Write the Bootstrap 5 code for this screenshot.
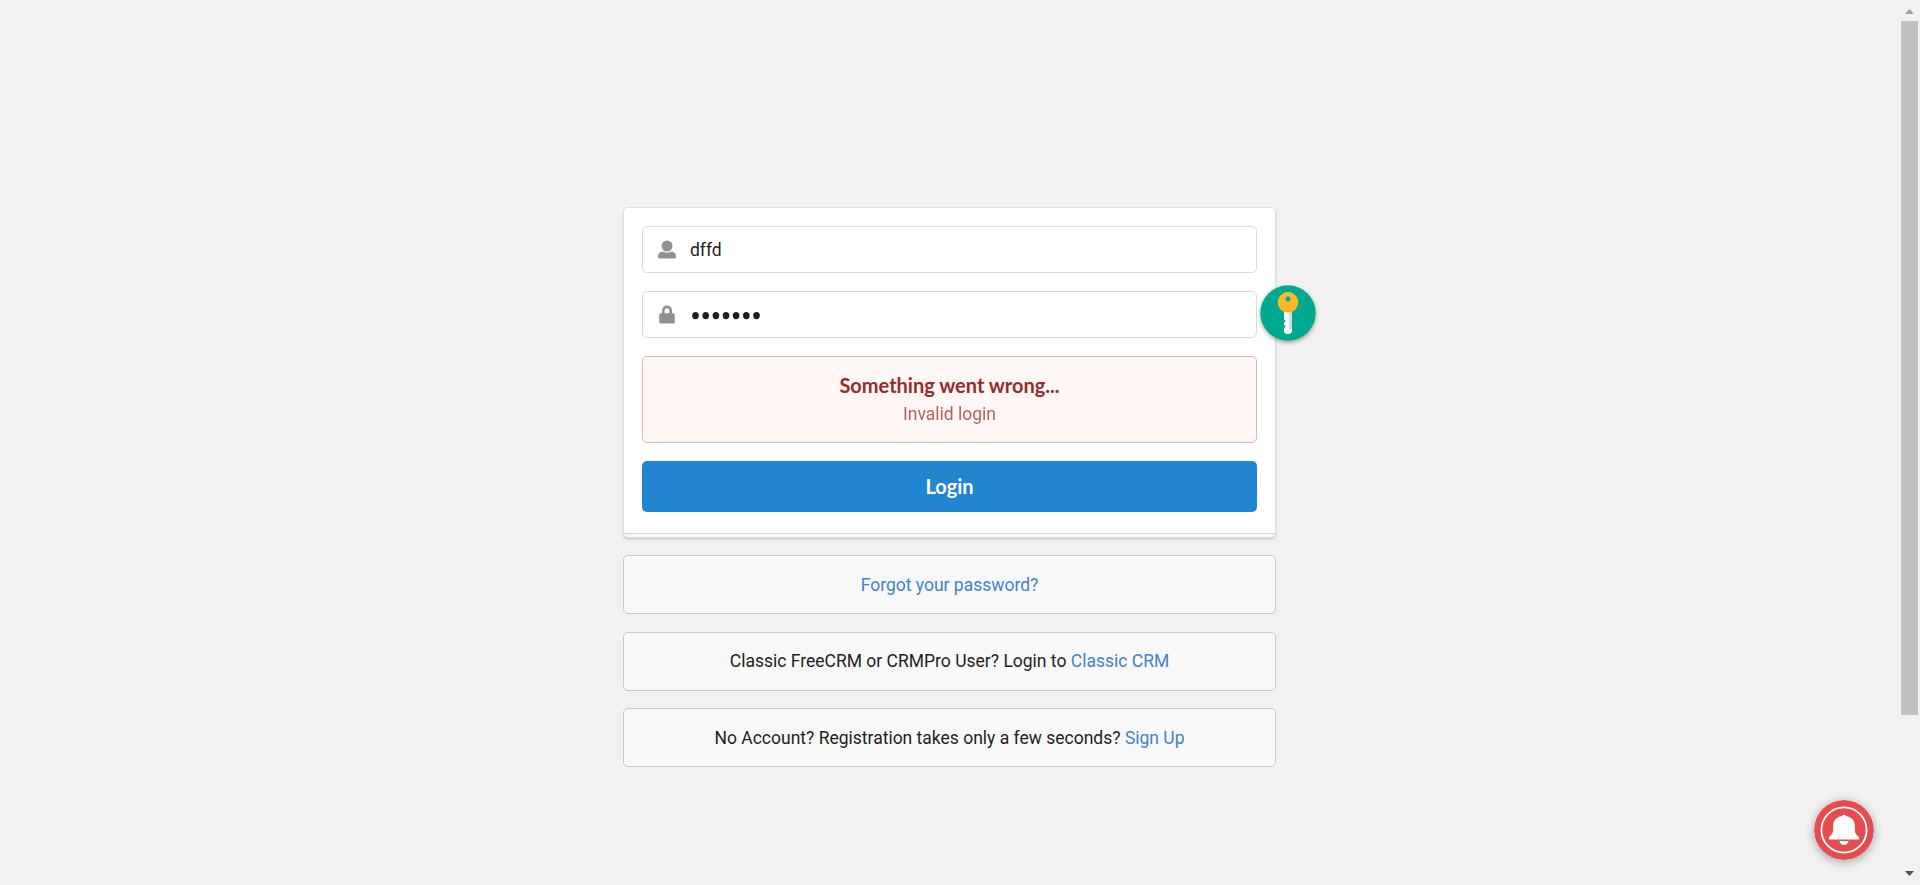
<!DOCTYPE html>
<html lang="en">
<head>
<meta charset="utf-8">
<meta name="viewport" content="width=device-width, initial-scale=1">
<title>Login</title>
<link href="https://cdn.jsdelivr.net/npm/bootstrap@5.3.0/dist/css/bootstrap.min.css" rel="stylesheet">
<style>
body{height:100vh;overflow:hidden;background:#f1f1f1;font:400 17.5px/26px Roboto,sans-serif;color:#1e1f20}
.login-page{width:1899px}
.login-col{width:653px;margin-top:207px}
.login-box{margin:1px 1px 18px;background:#f8f8f8;border-radius:4px;height:329px;box-shadow:0 0 0 1px #dcdddd,0 2px 3px 0 rgba(34,36,38,.26)}
.login-form{height:325px;padding:18px 18px 0;background:#fff;border-radius:4px 4px 0 0;box-shadow:0 1px 0 #d4d4d5}
.field-box{height:47px;border:1px solid #dbdbdc;border-radius:5px;margin-bottom:18px;padding-left:14px;background:#fff}
.field-box svg{width:20px;height:20px;margin-right:13px}
.field-box .pw-dots{width:73px;margin-right:0}
.field-box input{outline:0;font:inherit;color:inherit;min-width:0}
.err-box{height:87px;border:1px solid #e0b4b4;border-radius:5px;background:#fff6f6;color:#9f3a38;margin-bottom:18px;padding-top:15px}
.err-title{font:700 20px/26px Lato,sans-serif;color:#912d2b}
.err-text{opacity:.8;line-height:26px;margin-top:3px}
.btn-login{height:51px;border-radius:5px;background:#2185d0;color:#fff;font:700 20px/26px Lato,sans-serif;padding:0 0 2px}
.link-box{height:59px;border:1px solid #c9c9ca;border-radius:5px;background:#f8f8f8;margin-bottom:17px}
.link-box-raised{margin-top:18px;padding-bottom:2px}
.link-box a{color:#4183c4}
.key-badge{left:637px;top:78px;filter:drop-shadow(0 2px 2px rgba(0,0,0,.35))}
.bell-badge{left:1814px;top:800px;border-radius:50%;box-shadow:0 2px 10px rgba(0,0,0,.32)}
.scroll-rail{right:2px;width:17px;padding:9px 0}
.scroll-thumb{height:694px;background:#c1c1c1;margin-top:7px}
</style>
</head>
<body>
<main class="login-page d-flex justify-content-center">
<div class="login-col position-relative">
  <div class="login-box">
    <form class="login-form">
      <div class="field-box d-flex align-items-center">
        <svg viewBox="0 0 20 20" fill="#919191"><circle cx="10" cy="6" r="5.500"/><path d="M5.500 11.800h1a7 7 0 0 0 7 0h1a4.500 4.500 0 0 1 4.500 4.500V17q0 1.500-1.500 1.500h-15Q1 18.500 1 17v-.7A4.500 4.500 0 0 1 5.500 11.800Z"/></svg>
        <input class="border-0 p-0 flex-grow-1 bg-transparent" type="text" value="dffd" aria-label="Email">
      </div>
      <div class="field-box d-flex align-items-center">
        <svg viewBox="0 0 20 20" fill="#919191"><rect x="2.200" y="8.300" width="15.600" height="10.300" rx="1.700"/><path d="M6.300 9V5.600a3.700 3.700 0 0 1 7.400 0V9" fill="none" stroke="#919191" stroke-width="2.600"/></svg>
        <svg class="pw-dots" viewBox="0 0 73 20" fill="#1e1f20" role="img" aria-label="Password"><ellipse cx="5.500" cy="10.600" rx="3.300" ry="3.700"/><ellipse cx="15.700" cy="10.600" rx="3.300" ry="3.700"/><ellipse cx="25.900" cy="10.600" rx="3.300" ry="3.700"/><ellipse cx="36" cy="10.600" rx="3.300" ry="3.700"/><ellipse cx="46.100" cy="10.600" rx="3.300" ry="3.700"/><ellipse cx="56.300" cy="10.600" rx="3.300" ry="3.700"/><ellipse cx="66.500" cy="10.600" rx="3.300" ry="3.700"/></svg>
      </div>
      <div class="err-box text-center">
        <div class="err-title">Something went wrong...</div>
        <div class="err-text">Invalid login</div>
      </div>
      <button type="button" class="btn-login border-0 w-100">Login</button>
    </form>
  </div>
  <div class="link-box d-flex align-items-center justify-content-center mb-0"><a href="#" class="text-decoration-none">Forgot your password?</a></div>
  <div class="link-box link-box-raised d-flex align-items-center justify-content-center"><span>Classic FreeCRM or CRMPro User? Login to <a href="#" class="text-decoration-none">Classic CRM</a></span></div>
  <div class="link-box d-flex align-items-center justify-content-center"><span>No Account? Registration takes only a few seconds? <a href="#" class="text-decoration-none">Sign Up</a></span></div>
  <svg class="key-badge position-absolute" width="56" height="56" viewBox="0 0 56 56">
    <circle cx="28" cy="28" r="27.700" fill="#00a88f"/>
    <path d="M24 26h8v19.500a4 3.500 0 0 1-8 0v-2.500l2-1.500-2-1.500v-2.500l2-1.500-2-1.500Z" fill="#fff"/>
    <path d="M29 26h3v18l-3 1Z" fill="#dcdcdc"/>
    <path d="M28 7a10.300 10.300 0 1 0 .01 0ZM28 11.500a2.500 2.500 0 1 1-.01 0Z" fill="#fbb829" fill-rule="evenodd"/>
  </svg>
</div>
</main>
<svg class="bell-badge position-absolute" width="60" height="60" viewBox="0 0 60 60">
  <circle cx="30" cy="30" r="30" fill="#e64b4e"/>
  <circle cx="30" cy="30" r="22.600" fill="none" stroke="#fff" stroke-width="1.800"/>
  <path d="M28 16a2.200 2.200 0 0 1 4 0c5 .8 8.800 4.200 8.800 9.500 0 6 0 8.500 4.200 11.500v2.500H15V37c4.200-3 4.200-5.500 4.200-11.500 0-5.300 3.800-8.700 8.800-9.500ZM25.500 41h9a4.500 4 0 0 1-9 0Z" fill="#fff"/>
</svg>
<div class="scroll-rail position-absolute top-0 bottom-0 d-flex flex-column">
  <svg class="mx-auto flex-shrink-0" width="9" height="5" viewBox="0 0 9 5"><path d="M4.500 0 9 5H0Z" fill="#a3a3a3"/></svg>
  <div class="scroll-thumb flex-shrink-0"></div>
  <svg class="mx-auto mt-auto flex-shrink-0" width="9" height="5" viewBox="0 0 9 5"><path d="M0 0h9L4.500 5Z" fill="#505050"/></svg>
</div>
<script src="https://cdn.jsdelivr.net/npm/bootstrap@5.3.0/dist/js/bootstrap.bundle.min.js"></script>
</body>
</html>
